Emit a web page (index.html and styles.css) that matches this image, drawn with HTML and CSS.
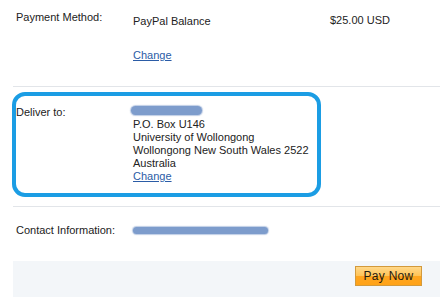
FILE: index.html
```html
<!DOCTYPE html>
<html>
<head>
<meta charset="utf-8">
<link rel="stylesheet" href="styles.css">
</head>
<body>
<div class="page">
  <div class="row row-payment">
    <div class="label">Payment Method:</div>
    <div class="value">
      <div>PayPal Balance</div>
      <a class="link change-pay" href="#">Change</a>
    </div>
    <div class="amount">$25.00 USD</div>
  </div>
  <div class="row row-deliver">
    <div class="label">Deliver to:</div>
    <div class="value address">
      <div class="line"><span class="redact redact-name"></span></div>
      <div class="line">P.O. Box U146</div>
      <div class="line">University of Wollongong</div>
      <div class="line">Wollongong New South Wales 2522</div>
      <div class="line">Australia</div>
      <a class="link line" href="#">Change</a>
    </div>
    <div class="highlight"></div>
  </div>
  <div class="row row-contact">
    <div class="label">Contact Information:</div>
    <div class="value"><span class="redact redact-contact"></span></div>
  </div>
  <div class="footer">
    <button class="pay">Pay Now</button>
  </div>
</div>
</body>
</html>
```
FILE: styles.css
```css
html, body {
  margin: 0;
  padding: 0;
  background: #ffffff;
}
body {
  font-family: "Liberation Sans", Arial, sans-serif;
  font-size: 11px;
  line-height: 13px;
  color: #222222;
  width: 444px;
  height: 298px;
  overflow: hidden;
}
.page {
  padding: 0 4px 0 13px;
  position: relative;
}
.row {
  display: grid;
  grid-template-columns: 117px 197px 1fr;
  padding-left: 3px;
  border-bottom: 1px solid #e2e5e9;
}
.row-payment {
  padding-top: 11px;
  padding-bottom: 24px;
}
.row-payment .value {
  padding-top: 4px;
}
.row-payment .amount {
  padding-top: 3px;
}
.change-pay {
  display: inline-block;
  margin-top: 21px;
}
.link {
  color: #2b5ca6;
  text-decoration: underline;
}
.row-deliver {
  position: relative;
  padding-top: 19px;
  padding-bottom: 23px;
}
.address {
  display: flex;
  flex-direction: column;
  align-items: flex-start;
  margin-top: -1px;
}
.address .line {
  height: 13px;
}
.redact {
  display: inline-block;
  background: #7d9ccc;
  border-radius: 5px;
  box-shadow: 0 0 1px 1px rgba(125, 156, 204, 0.5);
}
.redact-name {
  width: 71px;
  height: 9px;
  margin-top: 1px;
  margin-left: -2px;
}
.highlight {
  position: absolute;
  left: -1px;
  top: 5px;
  width: 301px;
  height: 97px;
  border: 4px solid #1b9de4;
  border-radius: 13px;
  pointer-events: none;
}
.row-contact {
  grid-template-columns: 117px 1fr;
  padding-top: 17px;
  padding-bottom: 24px;
  border-bottom: none;
}
.redact-contact {
  width: 135px;
  height: 7px;
  margin-top: 3px;
  border-radius: 4px;
}
.footer {
  background: #f3f6f9;
  height: 36px;
  display: flex;
  justify-content: flex-end;
  align-items: flex-start;
  padding-top: 5px;
  padding-right: 18px;
  box-sizing: border-box;
}
.pay {
  width: 67px;
  height: 20px;
  padding: 0;
  margin: 0;
  font-family: "Liberation Sans", Arial, sans-serif;
  font-size: 12px;
  letter-spacing: 0.3px;
  color: #1f1a10;
  border: 1px solid #d39a3c;
  background: linear-gradient(to bottom, #ffd88a 0%, #ffc458 48%, #ffa51f 52%, #ffa318 100%);
  cursor: pointer;
}
```
